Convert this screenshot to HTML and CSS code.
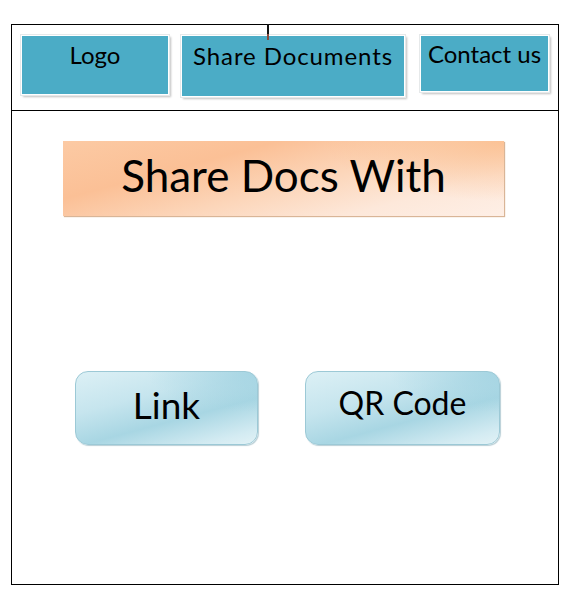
FILE: index.html
```html
<!DOCTYPE html>
<html>
<head>
<meta charset="utf-8">
<link rel="stylesheet" href="styles.css">
</head>
<body>
<div class="frame">
  <span class="tick"></span>
  <header class="header">
    <div class="nav nav-logo">Logo</div>
    <div class="nav nav-share">Share Documents</div>
    <div class="nav nav-contact">Contact us</div>
  </header>
  <main class="main">
    <div class="title">Share Docs With</div>
    <div class="options">
      <div class="opt opt-link">Link</div>
      <div class="opt opt-qr">QR Code</div>
    </div>
  </main>
</div>
</body>
</html>
```
FILE: styles.css
```css
html, body {
  margin: 0;
  padding: 0;
  background: #fff;
}
body {
  font-family: Lato, "Open Sans", sans-serif;
  color: #000;
}
.frame {
  position: relative;
  margin: 24px 0 0 11px;
  width: 546px;
  height: 559px;
  border: 1px solid #000;
  display: flex;
  flex-direction: column;
}
.tick {
  position: absolute;
  left: 255px;
  top: -1px;
  width: 2px;
  height: 16px;
  background: linear-gradient(#111 0 10px, #8b4a3c 10px);
}
.header {
  height: 86px;
  border-bottom: 1px solid #000;
  display: flex;
  align-items: flex-start;
  padding: 10px 0 0 9px;
  box-sizing: border-box;
}
.nav {
  background: #4bacc6;
  border: 1px solid #fff;
  outline: 1px solid #e6e9ea;
  box-shadow: 2px 2px 2px rgba(0,0,0,0.25);
  display: flex;
  justify-content: center;
  align-items: center;
  font-size: 24px;
  line-height: 28px;
  box-sizing: border-box;
}
.nav-logo {
  width: 148px;
  height: 60px;
  padding-bottom: 20px;
}
.nav-share {
  width: 224px;
  height: 62px;
  margin-left: 12px;
  padding-bottom: 20px;
  letter-spacing: 0.9px;
}
.nav-contact {
  width: 129px;
  height: 57px;
  margin-left: 15px;
  padding-bottom: 19px;
}
.main {
  display: flex;
  flex-direction: column;
  padding: 30px 0 0 51px;
}
.title {
  width: 441px;
  height: 75px;
  box-sizing: border-box;
  background:
    radial-gradient(ellipse 180px 60px at 100% 0%, rgba(251,190,142,0.85), rgba(251,190,142,0)),
    linear-gradient(165deg, #fccaa4 0%, #fbc096 30%, #fcd6ba 55%, #fde8da 78%, #feefe6 100%);
  box-shadow: 1px 1px 1px #d9b597;
  display: flex;
  align-items: center;
  justify-content: center;
  font-size: 44px;
  padding-bottom: 8px;
}
.options {
  display: flex;
  margin: 155px 0 0 12px;
  gap: 47px;
}
.opt {
  height: 74px;
  box-sizing: border-box;
  border-radius: 13px;
  border: 1px solid #9cc9d6;
  background:
    radial-gradient(ellipse 110px 40px at 100% 0%, rgba(160,210,225,0.8), rgba(160,210,225,0)),
    linear-gradient(165deg, #dcf0f5 0%, #c6e5ee 35%, #a8d6e3 62%, #d3ebf2 88%, #e2f2f6 100%);
  box-shadow: 1px 1px 1px #b9cfd6;
  display: flex;
  justify-content: center;
  align-items: center;
}
.opt-link {
  width: 183px;
  font-size: 37px;
  padding-bottom: 7px;
}
.opt-qr {
  width: 195px;
  font-size: 32px;
  padding-bottom: 11px;
}
```
